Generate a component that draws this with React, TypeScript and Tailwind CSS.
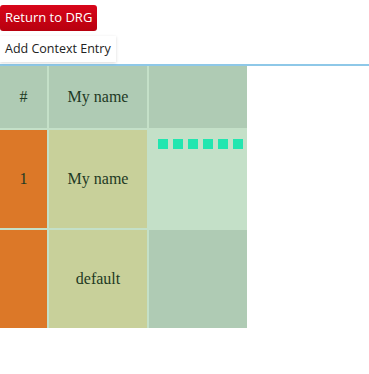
import React from 'react';

const cell = "flex items-center justify-center text-[16px] text-[#1e3a24]";

export default function App() {
    return (
        <div className="w-[369px] h-[374px] bg-white" style={{ fontFamily: '"Open Sans", "Noto Sans", sans-serif' }}>
            <div className="pt-[4px]">
                <button className="h-[26px] px-[5px] rounded-[3px] bg-gradient-to-b from-[#d8061a] to-[#b8000e] text-white text-[13px] leading-none">
                    Return to DRG
                </button>
            </div>
            <div className="mt-[4px]">
                <button className="h-[26px] px-[5px] bg-white text-[#222] text-[12.5px] leading-none shadow-[0_1px_3px_rgba(0,0,0,0.15)]">
                    Add Context Entry
                </button>
            </div>
            <div className="mt-[2px] h-[2px] bg-[#8ec8e8]"></div>
            <div className="grid grid-cols-[47px_98px_98px] grid-rows-[62px_98px_98px] gap-[2px] w-[247px] bg-[#c4e0c8]" style={{ fontFamily: '"Liberation Serif", serif' }}>
                <div className={`${cell} bg-[#afcbb4]`}>#</div>
                <div className={`${cell} bg-[#afcbb4]`}>My name</div>
                <div className="bg-[#afcbb4]"></div>

                <div className={`${cell} bg-[#dc7828]`}>1</div>
                <div className={`${cell} bg-[#c8d09a]`}>My name</div>
                <div className="bg-[#c4e0c8] flex gap-[5px] pt-[9px] pl-[9px]">
                    {[0, 1, 2, 3, 4, 5].map(i => (
                        <div key={i} className="w-[10px] h-[10px] bg-[#22e6b0]"></div>
                    ))}
                </div>

                <div className="bg-[#dc7828]"></div>
                <div className={`${cell} bg-[#c8d09a]`}>default</div>
                <div className="bg-[#afcbb4]"></div>
            </div>
        </div>
    );
}
